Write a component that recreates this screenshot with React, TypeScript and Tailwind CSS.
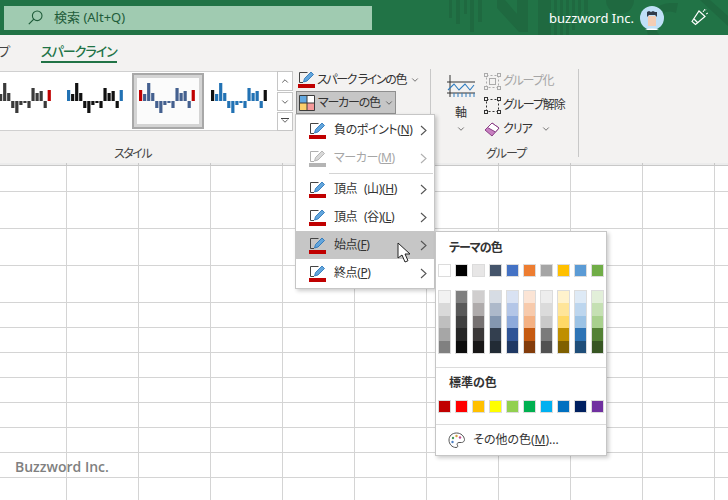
import { ChevronDown } from "lucide-react";

const jp = "font-['Noto_Sans','Noto_Sans_CJK_JP',sans-serif] [font-feature-settings:'palt'] whitespace-nowrap";

const rowHeights = [26, 37, 37, 37, 25, 25, 25, 25, 25, 25, 25, 25];
const columns = [67, 72, 72, 72, 72, 72, 72, 72, 72, 72, 72];

const sparkValues = [11, 7, 18, 8, -7, -12, -4, -2, -7, 13, 8, 10, -7, 11];
const thumbs = [
  { body: "#3a3a3a", first: "#3a3a3a", last: "#c00000" },
  { body: "#111111", first: "#2272b4", last: "#2272b4" },
  { body: "#44608f", first: "#c00000", last: "#c00000", selected: true },
  { body: "#2272b4", first: "#111111", last: "#111111" },
];

const themeColors = ["#ffffff", "#000000", "#e7e6e6", "#44546a", "#4472c4", "#ed7d31", "#a5a5a5", "#ffc000", "#5b9bd5", "#70ad47"];
const shades = [
  ["#f2f2f2", "#d9d9d9", "#bfbfbf", "#a6a6a6", "#808080"],
  ["#7f7f7f", "#595959", "#404040", "#262626", "#0d0d0d"],
  ["#d0cece", "#afabab", "#767171", "#3b3838", "#181717"],
  ["#d6dce4", "#adb9ca", "#8497b0", "#333f4f", "#222b35"],
  ["#d9e2f3", "#b4c6e7", "#8eaadb", "#2f5496", "#1f3864"],
  ["#fbe4d5", "#f7caac", "#f4b183", "#c55a11", "#833c0b"],
  ["#ededed", "#dbdbdb", "#c9c9c9", "#7b7b7b", "#525252"],
  ["#fff2cc", "#ffe599", "#ffd966", "#bf8f00", "#7f6000"],
  ["#deeaf6", "#bdd6ee", "#9cc3e5", "#2e74b5", "#1f4e79"],
  ["#e2efd9", "#c5e0b3", "#a8d08d", "#538135", "#375623"],
];
const standardColors = ["#c00000", "#ff0000", "#ffc000", "#ffff00", "#92d050", "#00b050", "#00b0f0", "#0070c0", "#002060", "#7030a0"];

function Sparkline({ body, first, last }: { body: string; first: string; last: string }) {
  return (
    <svg width="56" height="32" viewBox="0 0 56 32" className="block">
      {sparkValues.map((v, i) => (
        <rect
          key={i}
          x={i * 4.05}
          y={v > 0 ? 18 - v : 18}
          width="3.2"
          height={Math.abs(v)}
          fill={i === 0 ? first : i === sparkValues.length - 1 ? last : body}
        />
      ))}
    </svg>
  );
}

function PenIcon({ color = "#c00000", dim = false }: { color?: string; dim?: boolean }) {
  const line = dim ? "#b0b0b0" : "#444444";
  return (
    <svg width="17" height="17" viewBox="0 0 17 17" className="block shrink-0">
      <path d="M1.500 11.500V1.500H9.500M1.500 11.500H5" fill="none" stroke={line} strokeWidth="1" />
      <path d="M5.500 11l1-3.500L13 1l2.500 2.500L9 10z" fill={dim ? "#d8d8d8" : "#62a5dc"} stroke={dim ? "#a8a8a8" : "#1f6fb5"} strokeWidth="0.8" />
      <rect x="0" y="13" width="17" height="4" fill={color} />
    </svg>
  );
}

function MarkerIcon() {
  return (
    <svg width="16" height="16" viewBox="0 0 16 16" className="block shrink-0">
      <rect x="0.5" y="0.5" width="7.5" height="7.5" fill="#62a8e0" />
      <rect x="8" y="0.5" width="7.5" height="7.5" fill="#ffffff" />
      <rect x="0.5" y="8" width="7.5" height="7.5" fill="#fbcf6b" />
      <rect x="8" y="8" width="7.5" height="7.5" fill="#f59a9a" />
      <path d="M.5.5h15v15H.5zM8 .5v15M.5 8h15" fill="none" stroke="#3b3b3b" strokeWidth="1" />
    </svg>
  );
}

function Caret({ dim = false }: { dim?: boolean }) {
  return (
    <svg width="7" height="11" viewBox="0 0 7 11" className="block shrink-0">
      <path d="M1 1l5 4.500L1 10" fill="none" stroke={dim ? "#b0b0b0" : "#555555"} strokeWidth="1.1" />
    </svg>
  );
}

function GroupIcon({ dim = false }: { dim?: boolean }) {
  const c = dim ? "#ababab" : "#333333";
  return (
    <svg width="17" height="17" viewBox="0 0 17 17" className="block shrink-0">
      <rect x="2.5" y="2.5" width="12" height="12" fill="none" stroke={c} strokeWidth="1" strokeDasharray="2 2" />
      <rect x="0.5" y="0.5" width="3" height="3" fill="#f3f2f1" stroke={c} strokeWidth="1" />
      <rect x="13.5" y="0.5" width="3" height="3" fill="#f3f2f1" stroke={c} strokeWidth="1" />
      <rect x="0.5" y="13.5" width="3" height="3" fill="#f3f2f1" stroke={c} strokeWidth="1" />
      <rect x="13.5" y="13.5" width="3" height="3" fill="#f3f2f1" stroke={c} strokeWidth="1" />
      {dim && <rect x="5.5" y="5.5" width="6" height="6" fill="none" stroke={c} strokeWidth="1" />}
    </svg>
  );
}

function MenuRow({ label, mnemonic, dim = false, active = false }: { label: string; mnemonic: string; dim?: boolean; active?: boolean }) {
  return (
    <div className={`flex h-[28px] items-center pl-[13px] pr-[7px] ${active ? "bg-[#c6c6c6]" : ""}`}>
      <PenIcon color={dim ? "#b4b4b4" : "#c00000"} dim={dim} />
      <span className={`ml-[8px] flex-1 text-[12px] tracking-[-0.4px] [word-spacing:4px] ${dim ? "text-[#a6a6a6]" : "text-[#333333]"}`}>
        {label}(<u>{mnemonic}</u>)
      </span>
      <Caret dim={dim} />
    </div>
  );
}

function Swatch({ color }: { color: string }) {
  return <div className="h-[13px] w-[13px] border border-[#dcdcdc]" style={{ backgroundColor: color }} />;
}

export default function App() {
  return (
    <div className={`relative flex h-[500px] w-[728px] flex-col overflow-hidden bg-white ${jp}`}>
      {/* title bar */}
      <div className="relative flex h-[35px] shrink-0 items-center overflow-hidden bg-[#217346] text-white">
        <svg width="358" height="35" viewBox="0 0 358 35" className="absolute right-0 top-0">
          <g fill="#1f6940">
            <rect x="79" y="0" width="3" height="18" />
            <rect x="86" y="0" width="4" height="24" />
            <rect x="94" y="0" width="3" height="14" />
            <rect x="100" y="0" width="4" height="32" />
            <rect x="108" y="0" width="4" height="22" />
            <path d="M127 0h8l12 14V0h11v32h-9L127 8z" />
            <rect x="168" y="0" width="13" height="35" />
            <rect x="184" y="0" width="3" height="35" />
            <rect x="190" y="0" width="3" height="35" />
            <rect x="196" y="0" width="3" height="35" />
            <rect x="202" y="0" width="3" height="30" />
            <rect x="208" y="0" width="3" height="22" />
            <rect x="214" y="0" width="4" height="14" />
            <path d="M236 0h28a14 14 0 0 1-28 0z" />
            <path d="M278 35a24 24 0 0 1 24-32l6 0-2 10a14 14 0 1 0 4 22z" />
            <path d="M330 0h10l18 16v10z" />
          </g>
        </svg>
        <div className="relative ml-[4px] flex h-[24px] w-[368px] items-center bg-[#a0cbb1] pl-[24px] text-[#1f5c3a]">
          <svg width="15" height="15" viewBox="0 0 15 15" className="block">
            <circle cx="9.2" cy="5.8" r="4.8" fill="none" stroke="#1f5c3a" strokeWidth="1.1" />
            <path d="M5.8 9.2L.8 14.2" stroke="#1f5c3a" strokeWidth="1.2" />
          </svg>
          <span className="ml-[11px] text-[13px]">検索 (Alt+Q)</span>
        </div>
        <span className="absolute left-[549px] top-[8px] text-[13px] leading-[20px]">buzzword Inc.</span>
        <svg width="24" height="24" viewBox="0 0 24 24" className="absolute left-[640px] top-[6px]">
          <circle cx="12" cy="12" r="12" fill="#bfe0f7" />
          <path d="M8 10h8v10H8z" fill="#f3cdb4" />
          <path d="M5 24a9 4 0 0 1 14 0z" fill="#ffffff" />
          <path d="M7 11V6l2-1 2 1 2-1 2 1 2 0v5l-2-2H9z" fill="#2f3b4a" />
        </svg>
        <svg width="18" height="18" viewBox="0 0 18 18" className="absolute left-[691px] top-[8px]">
          <path d="M1 13.500L8 3l6 5.500L4.500 16.500z" fill="none" stroke="#ffffff" strokeWidth="1.2" />
          <path d="M3 11l4 4" stroke="#ffffff" strokeWidth="1.2" />
          <path d="M12 4l2-3M15 6l2-1M14 2.500l.8-.8" stroke="#ffffff" strokeWidth="1" />
        </svg>
      </div>

      {/* tabs */}
      <div className="relative flex h-[33px] shrink-0 items-center bg-[#f3f2f1] text-[13px]">
        <span className="ml-[-26px] w-[67px] text-[#444444]">ループ</span>
        <span className="flex h-[33px] flex-col justify-center pt-[1px] font-medium tracking-[-1px] text-[#217346]">
          <span className="border-b-[2px] border-[#217346] leading-[20px]">スパークライン</span>
        </span>
      </div>

      {/* ribbon */}
      <div className="flex h-[95px] shrink-0 bg-[#f3f2f1] text-[#333333]">
        <div className="flex w-[293px] shrink-0 flex-col pt-[3px]">
          <div className="flex h-[60px] border-y border-[#d0d0d0] bg-white">
            <div className="ml-[-12px] flex h-[58px] w-[289px] shrink-0 items-center overflow-hidden">
              {thumbs.map((t, i) => (
                <div
                  key={i}
                  className={`flex h-[56px] w-[72px] shrink-0 items-start justify-start ${t.selected ? "border-[2px] border-[#a8a8a8] bg-[#fbfbfb] pl-[5px] pt-[8px] outline-[3px] -outline-offset-[5px] outline-[#d4d4d4]" : "pl-[7px] pt-[10px]"}`}
                >
                  <Sparkline body={t.body} first={t.first} last={t.last} />
                </div>
              ))}
            </div>
            <div className="mt-[-1px] flex h-[60px] w-[16px] shrink-0 flex-col justify-between">
              <div className="flex h-[20px] items-center justify-center border border-[#c6c6c6] bg-white text-[#444444]">
                <ChevronDown size={10} strokeWidth={2} className="rotate-180" />
              </div>
              <div className="flex h-[19px] items-center justify-center border border-[#c6c6c6] bg-white text-[#444444]">
                <ChevronDown size={10} strokeWidth={2} />
              </div>
              <div className="flex h-[19px] flex-col items-center justify-center border border-[#c6c6c6] bg-white text-[#444444]">
                <div className="mb-[-3px] h-px w-[8px] bg-[#444444]" />
                <ChevronDown size={10} strokeWidth={2} />
              </div>
            </div>
          </div>
          <div className="flex h-[32px] items-end pl-[114px] text-[12px] leading-[18px] tracking-[-1.5px] text-[#444444]">スタイル</div>
        </div>

        <div className="ml-[3px] flex w-[134px] shrink-0 flex-col text-[12px]">
          <div className="flex h-[23px] items-center pl-[2px]">
            <PenIcon />
            <span className="ml-[2px] tracking-[-1.4px]">スパーク ラインの色</span>
            <ChevronDown size={10} strokeWidth={1.6} className="ml-[4px]" />
          </div>
          <div className="flex h-[23px] w-[100px] items-center border border-[#8f8f8f] bg-[#c6c6c6] pl-[2px]">
            <MarkerIcon />
            <span className="ml-[3px] tracking-[-1.2px]">マーカーの色</span>
            <ChevronDown size={10} strokeWidth={1.6} className="ml-[4px]" />
          </div>
        </div>

        <div className="mt-[1px] h-[86px] w-px shrink-0 bg-[#c8c8c8]" />

        <div className="ml-[15px] flex w-[30px] shrink-0 flex-col items-center pt-[7px] text-[12px]">
          <svg width="28" height="24" viewBox="0 0 28 24" className="block">
            <path d="M0 7h28M3 0v22M0 18h28" fill="none" stroke="#333333" strokeWidth="1" />
            <path d="M1 15l6-6 5 6 6-6 5 6 4-5" fill="none" stroke="#2e7cc0" strokeWidth="1.1" />
            <path d="M7 18v4M11 18v4M15 18v4M19 18v4M23 18v4M27 18v4" stroke="#2e7cc0" strokeWidth="1" />
          </svg>
          <span className="mt-[5px] leading-[18px]">軸</span>
          <ChevronDown size={10} strokeWidth={1.6} className="mt-[2px]" />
        </div>

        <div className="ml-[8px] flex w-[94px] shrink-0 flex-col pt-[1px] text-[12px]">
          <div className="flex h-[24px] items-center text-[#a6a6a6]">
            <GroupIcon dim />
            <span className="ml-[2px] tracking-[-1.2px]">グループ化</span>
          </div>
          <div className="flex h-[24px] items-center">
            <GroupIcon />
            <span className="ml-[2px] tracking-[-1.1px]">グループ解除</span>
          </div>
          <div className="flex h-[24px] items-center">
            <svg width="16" height="16" viewBox="0 0 16 16" className="block">
              <path d="M1 9l7-7 7 5-7 8z" fill="#c77fc0" stroke="#8a3f86" strokeWidth="1" />
              <path d="M3.500 6.500L8 2l7 5-3.500 4z" fill="#ffffff" stroke="#8a3f86" strokeWidth="1" />
            </svg>
            <span className="ml-[3px] tracking-[-1px]">クリア</span>
            <ChevronDown size={10} strokeWidth={1.6} className="ml-[9px]" />
          </div>
          <div className="flex flex-1 items-end pl-[2px] leading-[18px] tracking-[-1px] text-[#444444]">グループ</div>
        </div>

        <div className="mt-[1px] h-[88px] w-px shrink-0 bg-[#c8c8c8]" />
      </div>

      {/* column header strip */}
      <div className="flex h-[3px] shrink-0 border-b border-[#c8c8c8] bg-[#ececec]">
        {columns.map((w, i) => (
          <div key={i} className="shrink-0 border-r border-[#c8c8c8]" style={{ width: w }} />
        ))}
      </div>

      {/* sheet */}
      <div className="flex flex-col">
        {rowHeights.map((h, r) => (
          <div key={r} className="flex shrink-0 border-b border-[#d4d4d4]" style={{ height: h }}>
            {columns.map((w, c) => (
              <div key={c} className="shrink-0 border-r border-[#d4d4d4]" style={{ width: w }} />
            ))}
          </div>
        ))}
      </div>

      <span className="absolute left-[15px] top-[457px] font-['Open_Sans',sans-serif] text-[14px] font-semibold leading-[20px] text-[#808080]">Buzzword Inc.</span>

      {/* marker colour menu */}
      <div className="absolute left-[295px] top-[114px] w-[140px] border border-[#c6c6c6] bg-white py-px shadow-[2px_2px_4px_rgba(0,0,0,0.2)]">
        <MenuRow label="負のポイント" mnemonic="N" />
        <MenuRow label="マーカー" mnemonic="M" dim />
        <div className="ml-[33px] mr-px my-[1px] h-px bg-[#d4d4d4]" />
        <MenuRow label="頂点 (山)" mnemonic="H" />
        <MenuRow label="頂点 (谷)" mnemonic="L" />
        <MenuRow label="始点" mnemonic="F" active />
        <MenuRow label="終点" mnemonic="P" />
      </div>

      {/* mouse pointer */}
      <svg width="17" height="22" viewBox="0 0 17 22" className="absolute left-[397px] top-[242px]">
        <path d="M1 1v15l4-3 3 7 3-1.300-3-6.700h5z" fill="#ffffff" stroke="#222222" strokeWidth="1" />
      </svg>

      {/* colour palette submenu */}
      <div className="absolute left-[435px] top-[231px] w-[172px] border border-[#c6c6c6] bg-white text-[#333333] shadow-[2px_2px_4px_rgba(0,0,0,0.2)]">
        <div className="flex h-[31px] items-center pl-[13px] text-[12px] font-semibold tracking-[-1px]">テーマの色</div>
        <div className="ml-[2px] mt-[1px] flex gap-[4px]">
          {themeColors.map((c) => (
            <Swatch key={c} color={c} />
          ))}
        </div>
        <div className="ml-[2px] mt-[13px] flex gap-[4px]">
          {shades.map((col, i) => (
            <div key={i} className="flex h-[64px] w-[13px] flex-col border border-[#dcdcdc]">
              {col.map((c) => (
                <div key={c} className="flex-1" style={{ backgroundColor: c }} />
              ))}
            </div>
          ))}
        </div>
        <div className="mt-[13px] h-px bg-[#dcdcdc]" />
        <div className="flex h-[30px] items-center pl-[13px] text-[12px] font-semibold">標準の色</div>
        <div className="ml-[2px] mt-[2px] flex gap-[4px]">
          {standardColors.map((c) => (
            <Swatch key={c} color={c} />
          ))}
        </div>
        <div className="mt-[11px] h-px bg-[#dcdcdc]" />
        <div className="flex h-[30px] items-center pl-[12px] text-[12px]">
          <svg width="17" height="17" viewBox="0 0 17 17" className="block shrink-0">
            <path d="M8.500 1C4 1 1 4 1 8s3 7.500 7 7.500c2 0 2-1.500 1.300-2.500-.7-1 0-2.500 1.700-2.500h2.500c1.500 0 3-1 3-3C16 4 13 1 8.500 1z" fill="#ffffff" stroke="#555555" strokeWidth="1" />
            <circle cx="5" cy="6" r="1.200" fill="#4a9a5b" />
            <circle cx="8.500" cy="4" r="1.200" fill="#d8a13a" />
            <circle cx="12" cy="5.500" r="1.200" fill="#c2518f" />
            <circle cx="4.500" cy="10" r="1.200" fill="#4a7fc4" />
          </svg>
          <span className="ml-[8px]">その他の色(<u>M</u>)...</span>
        </div>
      </div>
    </div>
  );
}
